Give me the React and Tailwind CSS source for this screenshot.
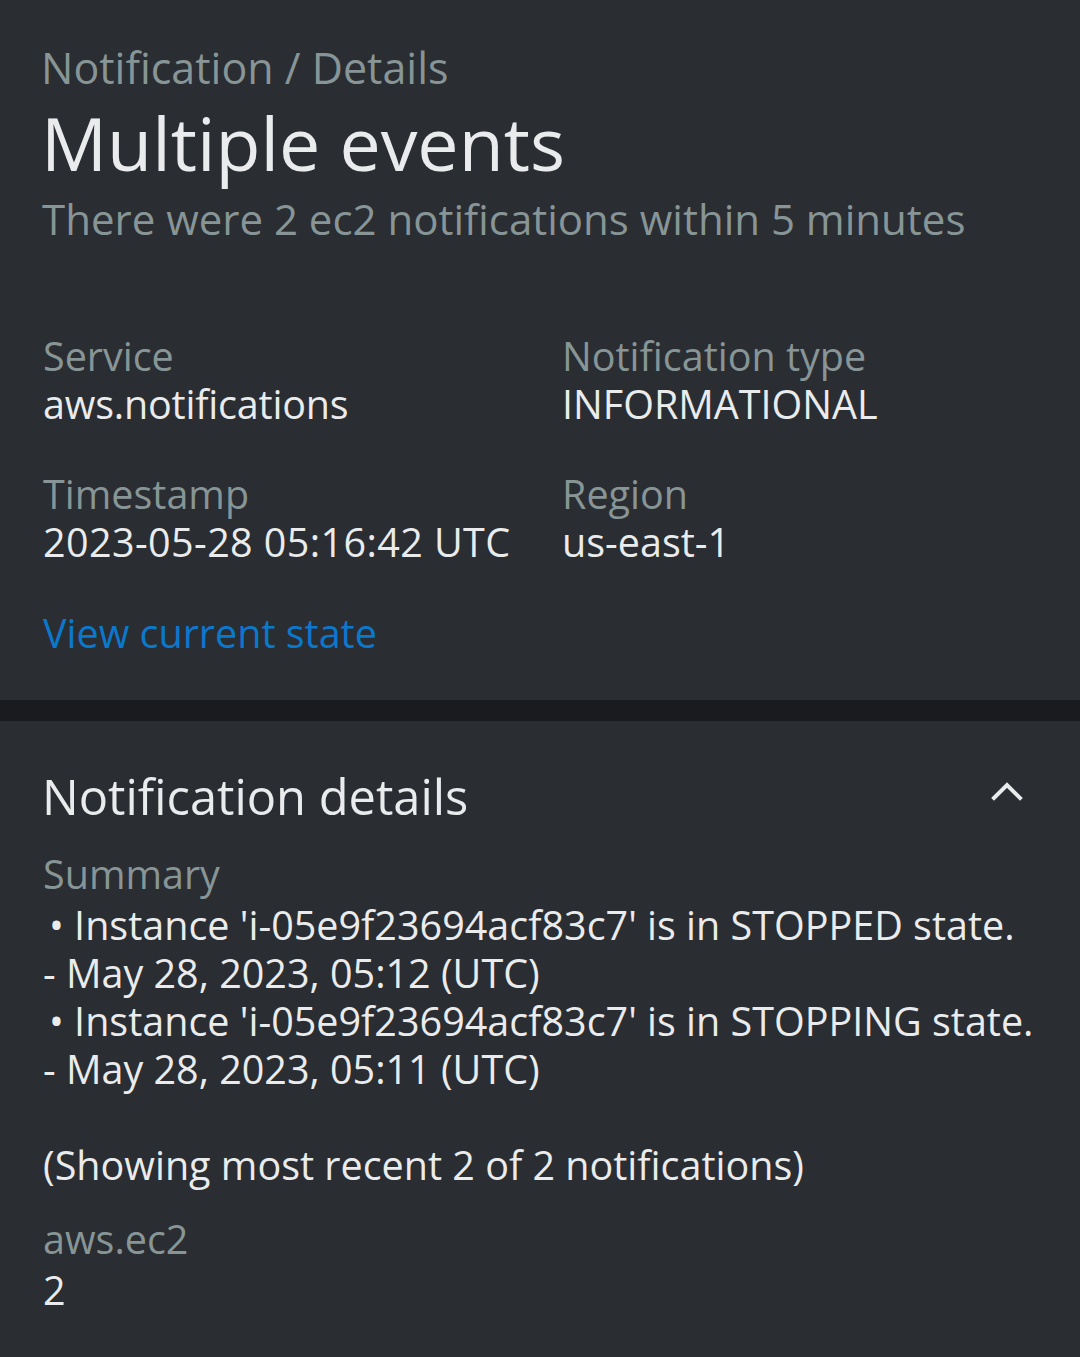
import React from 'react';

const font = { fontFamily: '"Open Sans", "Noto Sans", sans-serif' };

const Field = ({ label, value, valueClass = '' }) => (
  <div>
    <div className="text-[39.5px] leading-[48px] text-[#879596]">{label}</div>
    <div className={`text-[39.5px] leading-[48px] text-[#e9ebed] ${valueClass}`}>
      {value}
    </div>
  </div>
);

const ChevronUp = () => (
  <svg width="32" height="20" viewBox="0 0 32 20" fill="none">
    <polyline
      points="3,17 16,4 29,17"
      stroke="#e9ebed"
      strokeWidth="4"
      strokeLinecap="square"
    />
  </svg>
);

export default function App() {
  const summary = [
    { state: 'STOPPED', time: '05:12' },
    { state: 'STOPPING', time: '05:11' },
  ];

  return (
    <div className="min-h-[1357px] bg-[#2a2d32]" style={font}>
      {/* Header */}
      <section className="pl-[43px] pr-[43px] pt-[44px] pb-[43px]">
        <div className="-ml-[2px] text-[43px] leading-[48px] text-[#879596]">
          Notification / Details
        </div>
        <h1 className="-ml-[2px] mt-[6px] text-[73.5px] leading-[90px] text-[#e9ebed]">
          Multiple events
        </h1>
        <div className="-ml-[1px] mt-[7px] text-[42px] leading-[48px] text-[#879596]">
          There were 2 ec2 notifications within 5 minutes
        </div>

        <div className="mt-[89px] grid grid-cols-[519px_1fr] gap-y-[42px]">
          <Field label="Service" value="aws.notifications" valueClass="tracking-[-0.2px]" />
          <Field label="Notification type" value="INFORMATIONAL" />
          <Field
            label="Timestamp"
            value="2023-05-28 05:16:42 UTC"
            valueClass="tracking-[0.4px]"
          />
          <Field label="Region" value="us-east-1" />
        </div>

        <a className="mt-[43px] block text-[39.5px] leading-[48px] text-[#0a78cc]">
          View current state
        </a>
      </section>

      <div className="h-[21px] bg-[#191b1f]" />

      {/* Notification details */}
      <section className="pl-[43px] pr-[43px] pt-[47px] pb-[40px]">
        <div className="flex items-center justify-between">
          <h2 className="-ml-[1px] text-[48.8px] leading-[56px] text-[#e9ebed]">
            Notification details
          </h2>
          <div className="mr-[14px] -mt-[10px]">
            <ChevronUp />
          </div>
        </div>

        <div className="mt-[26px] text-[39.5px] leading-[48px] text-[#879596]">
          Summary
        </div>
        <div className="mt-[3px] text-[39.5px] leading-[48px] text-[#e9ebed]">
          {summary.map((s) => (
            <React.Fragment key={s.state}>
              <div className="pl-[6px]">
                • Instance 'i-05e9f23694acf83c7' is in {s.state} state.
              </div>
              <div>- May 28, 2023, {s.time} (UTC)</div>
            </React.Fragment>
          ))}
          <div className="h-[48px]" />
          <div>(Showing most recent 2 of 2 notifications)</div>
        </div>

        <div className="mt-[26px] text-[39.5px] leading-[48px] text-[#879596]">
          aws.ec2
        </div>
        <div className="mt-[3px] text-[39.5px] leading-[48px] text-[#e9ebed]">
          2
        </div>
      </section>
    </div>
  );
}
